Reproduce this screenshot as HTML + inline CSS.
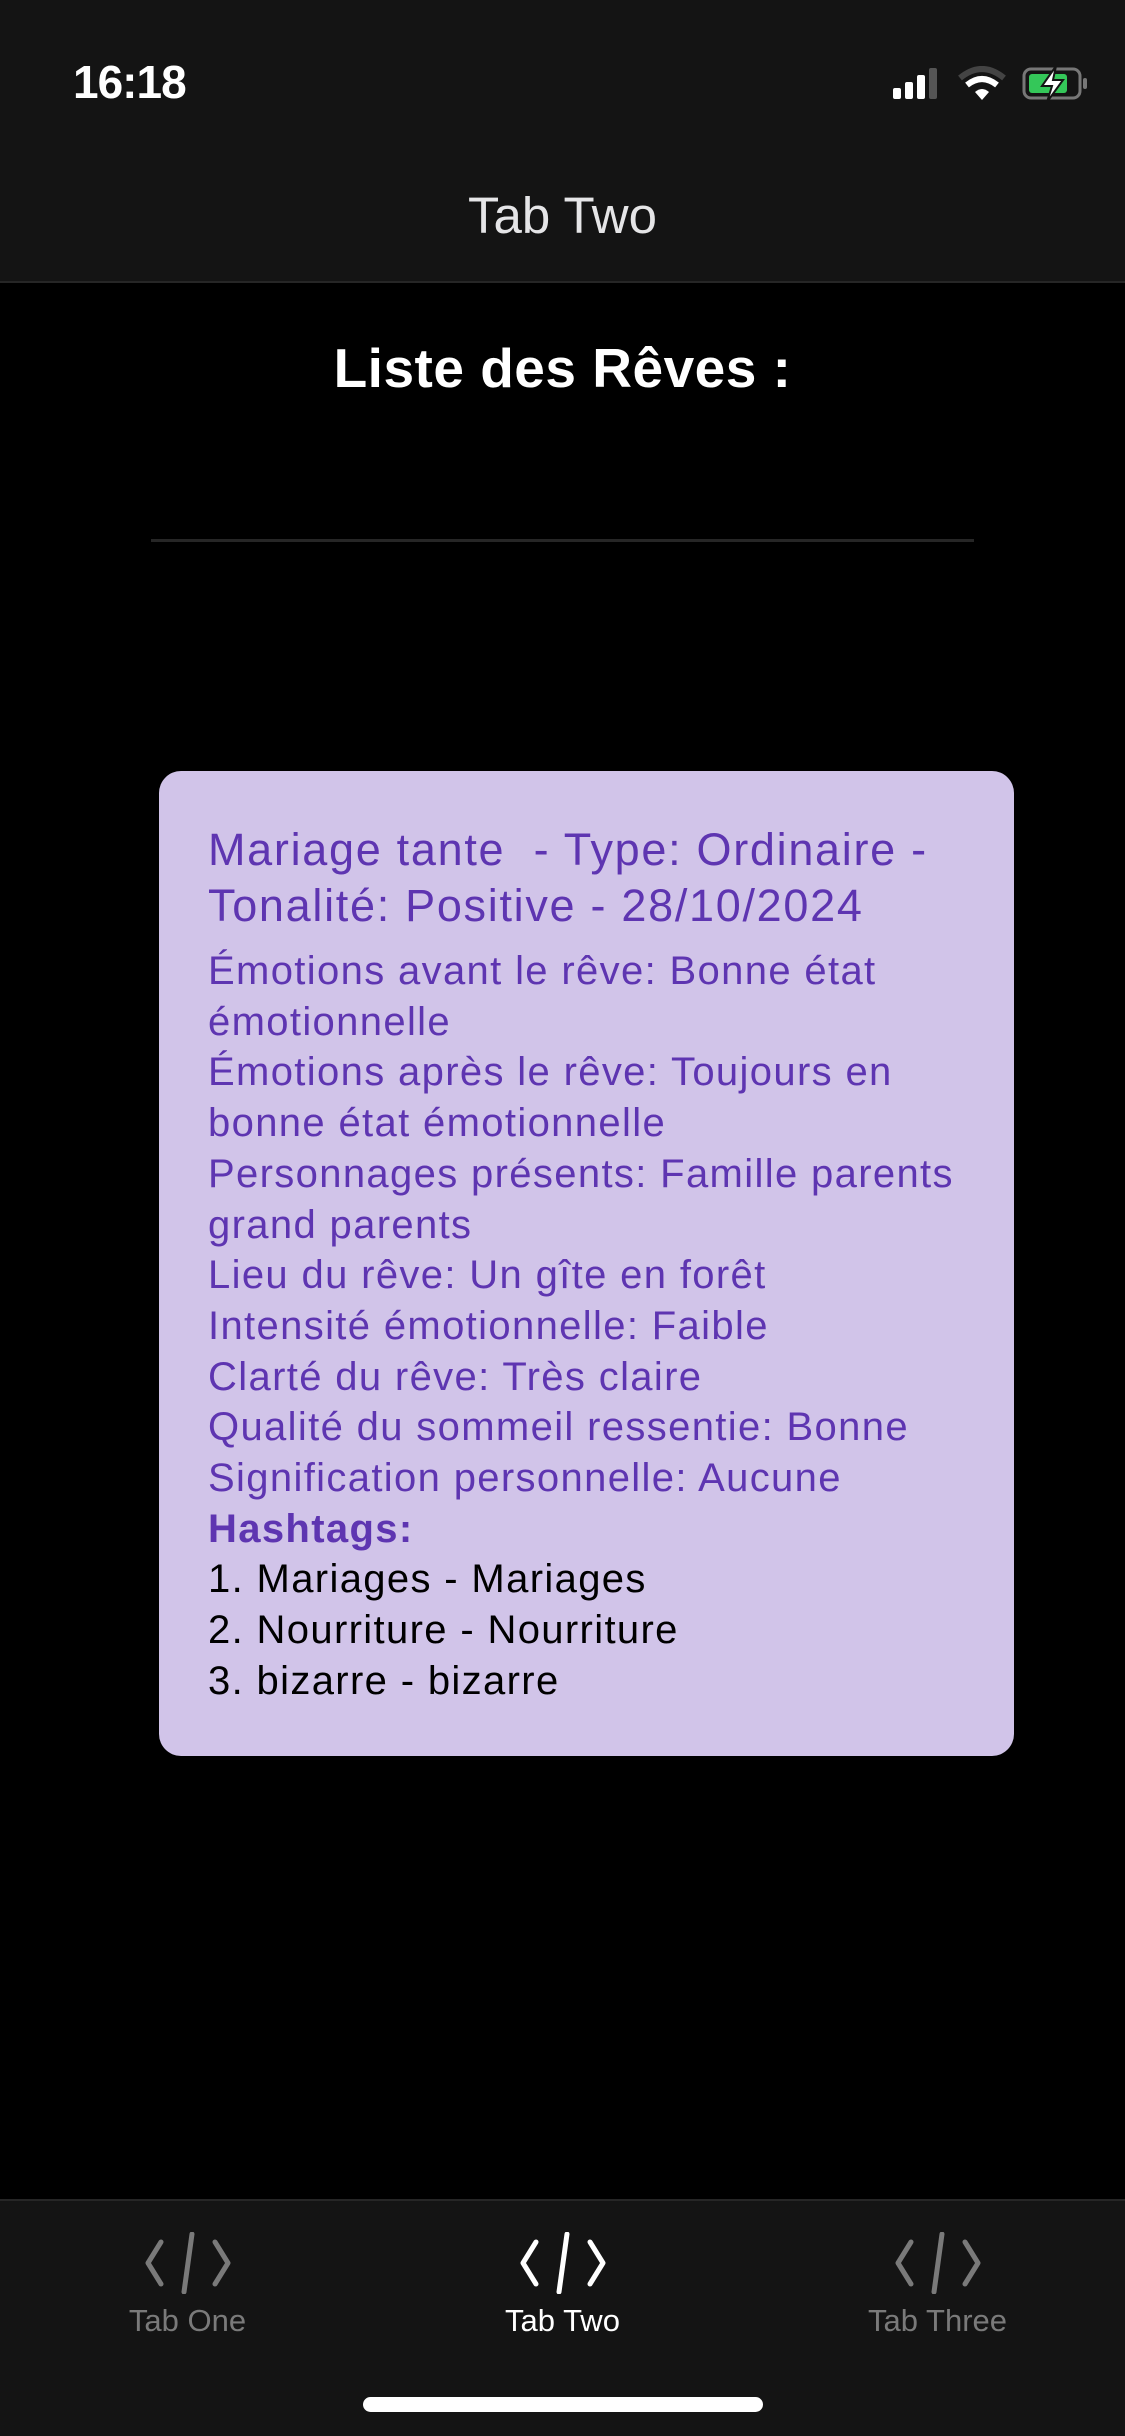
<!DOCTYPE html>
<html><head><meta charset="utf-8"><style>
*{margin:0;padding:0;box-sizing:border-box}
body{width:1125px;height:2436px;background:#000;font-family:"Liberation Sans",sans-serif;position:relative;overflow:hidden}
.abs{position:absolute}
.hdr{left:0;top:0;width:1125px;height:283px;background:#141414;border-bottom:2px solid #262626}
.card{left:159px;top:771px;width:855px;height:985px;background:#d1c4e9;border-radius:22px}
.t{position:absolute;left:208px;color:#5e35b1;white-space:nowrap}
.tab{position:absolute;top:2200px;width:375px;text-align:center}
</style></head><body>
<div class="abs hdr"></div>
<div class="abs" style="left:73px;top:55px;color:#fff;font-size:46px;font-weight:bold;letter-spacing:-1px">16:18</div>
<svg class="abs" style="left:890px;top:66px" width="200" height="36" viewBox="0 0 200 36">
<rect x="3" y="22" width="8" height="11" rx="2" fill="#fff"/>
<rect x="15" y="16" width="8" height="17" rx="2" fill="#fff"/>
<rect x="27" y="9" width="8" height="24" rx="2" fill="#fff"/>
<rect x="39" y="2" width="8" height="31" rx="2" fill="#555"/>
<path d="M70 12 Q92 -6 114 12" stroke="#444" stroke-width="6" fill="none"/>
<path d="M77 19 Q92 7 107 19" stroke="#fff" stroke-width="6" fill="none"/>
<path d="M85 26 L92 34 L99 26 Q92 20 85 26Z" fill="#fff"/>
<rect x="134" y="3" width="56" height="29" rx="7" fill="none" stroke="#777" stroke-width="3"/>
<rect x="139" y="8" width="38" height="19" rx="3" fill="#34c759"/>
<rect x="193" y="12" width="4" height="11" rx="2" fill="#777"/>
<path d="M166 0 L152 20 L162 20 L157 36 L173 14 L163 14 Z" fill="#fff" stroke="#141414" stroke-width="2"/>
</svg>
<div class="abs" style="left:0;top:186px;width:1125px;text-align:center;color:#e5e5e7;font-size:51px">Tab Two</div>
<div class="abs" style="left:0;top:336px;width:1125px;text-align:center;color:#fff;font-size:55px;font-weight:bold;letter-spacing:0.5px">Liste des Rêves :</div>
<div class="abs" style="left:151px;top:539px;width:823px;height:3px;background:#262626"></div>
<div class="abs card"></div>
<div class="t" style="top:822px;font-size:45px;line-height:56px;letter-spacing:1.7px">Mariage tante&nbsp; - Type: Ordinaire -<br>Tonalité: Positive - 28/10/2024</div>
<div class="t" style="top:946px;font-size:40px;line-height:50.7px;letter-spacing:1.35px">Émotions avant le rêve: Bonne état<br>émotionnelle<br>Émotions après le rêve: Toujours en<br>bonne état émotionnelle<br>Personnages présents: Famille parents<br>grand parents<br>Lieu du rêve: Un gîte en forêt<br>Intensité émotionnelle: Faible<br>Clarté du rêve: Très claire<br>Qualité du sommeil ressentie: Bonne<br>Signification personnelle: Aucune<br><b>Hashtags:</b><br><span style="color:#000">1. Mariages - Mariages<br>2. Nourriture - Nourriture<br>3. bizarre - bizarre</span></div>
<div class="abs" style="left:0;top:2199px;width:1125px;height:237px;background:#141414;border-top:2px solid #262626"></div>
<div class="tab" style="left:0;color:#7a7a7a">
<svg width="88" height="62" viewBox="0 0 88 62" style="margin-top:32px"><g stroke="#7a7a7a" stroke-width="5" fill="none" stroke-linecap="round" stroke-linejoin="round"><path d="M17 10 L4 31 L17 52"/><path d="M71 10 L84 31 L71 52"/><path d="M48 2 L40 60"/></g></svg>
<div style="font-size:31px;margin-top:4px">Tab One</div></div>
<div class="tab" style="left:375px;color:#fff">
<svg width="88" height="62" viewBox="0 0 88 62" style="margin-top:32px"><g stroke="#fff" stroke-width="5" fill="none" stroke-linecap="round" stroke-linejoin="round"><path d="M17 10 L4 31 L17 52"/><path d="M71 10 L84 31 L71 52"/><path d="M48 2 L40 60"/></g></svg>
<div style="font-size:31px;margin-top:4px">Tab Two</div></div>
<div class="tab" style="left:750px;color:#7a7a7a">
<svg width="88" height="62" viewBox="0 0 88 62" style="margin-top:32px"><g stroke="#7a7a7a" stroke-width="5" fill="none" stroke-linecap="round" stroke-linejoin="round"><path d="M17 10 L4 31 L17 52"/><path d="M71 10 L84 31 L71 52"/><path d="M48 2 L40 60"/></g></svg>
<div style="font-size:31px;margin-top:4px">Tab Three</div></div>
<div class="abs" style="left:363px;top:2397px;width:400px;height:15px;border-radius:8px;background:#fff"></div>
</body></html>
